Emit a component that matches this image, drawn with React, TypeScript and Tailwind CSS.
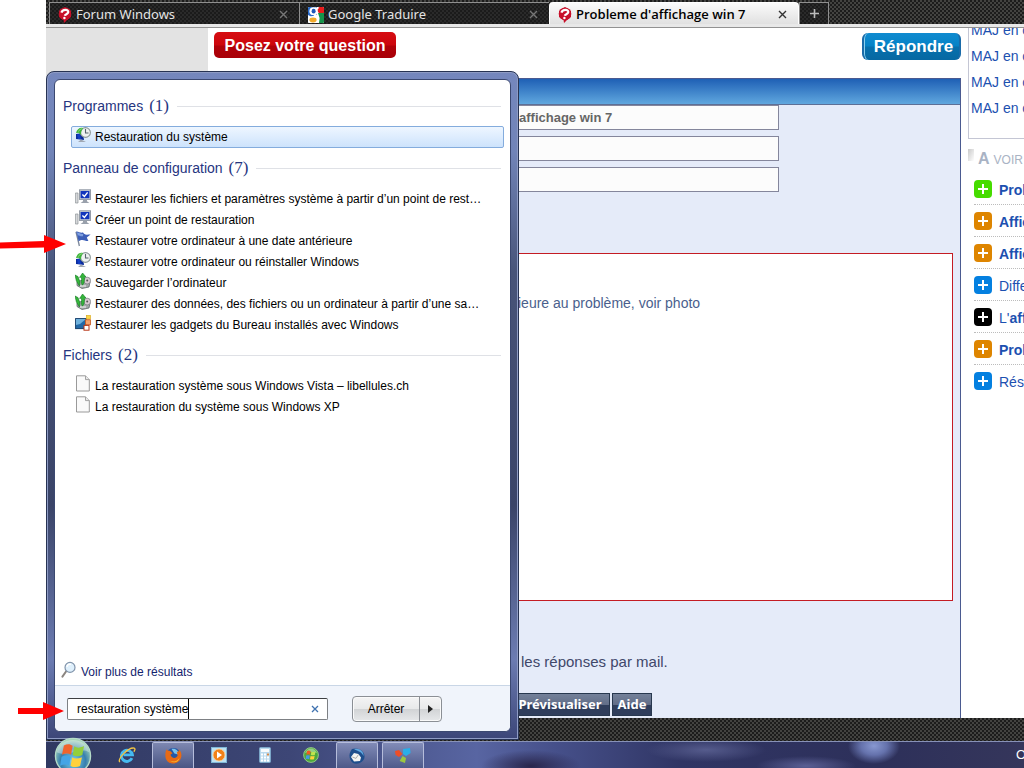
import React from "react";

const arial = "font-['Liberation_Sans',Arial,sans-serif]";
const segoe = "font-['Noto_Sans','Open_Sans',sans-serif]";
const carbon =
  "bg-[repeating-conic-gradient(#434341_0_25%,#1c1c1c_0_50%)] bg-[length:4px_4px]";

function HelpIcon() {
  return (
    <svg width="14" height="16" viewBox="0 0 14 16" className="shrink-0">
      <path d="M7 0 L13 4 V10 L9 13 L6 16 L5.5 13 L1 10 V4 Z" fill="#c8102a" />
      <circle cx="7" cy="6.8" r="6.3" fill="#c8102a" />
      <path d="M3.4 5.6 C4.6 1.6 11 2.2 10.2 5.4 C9.6 7.4 7.2 7 6.8 8.8" fill="none" stroke="#fff" strokeWidth="2.2" />
      <circle cx="6.4" cy="11" r="1.2" fill="#fff" />
    </svg>
  );
}

function GoogleIcon() {
  return (
    <svg width="16" height="16" viewBox="0 0 16 16" className="shrink-0">
      <rect width="16" height="16" rx="1" fill="#fff" />
      <path d="M0 1a1 1 0 0 1 1-1h8v8L3 9.5 0 8z" fill="#2a6bcb" />
      <path d="M10.5 0H15a1 1 0 0 1 1 1v5h-5L9 4z" fill="#ea1c1c" />
      <path d="M10 6h6v9a1 1 0 0 1-1 1h-4l.6-5z" fill="#16944a" />
      <ellipse cx="5.6" cy="4.2" rx="4.2" ry="3.9" fill="#fff" />
      <ellipse cx="5.6" cy="4.2" rx="2" ry="2.4" fill="#1d57b8" />
      <path d="M7 .4h4.4L10 2H8z" fill="#fff" />
      <path d="M5.4 7.4l2.8 0c3 2 3 4 2.8 8.2H0V11c2-2 4-1.6 6-2z" fill="#fff" />
      <ellipse cx="5" cy="13" rx="3.6" ry="2.4" fill="#f0a92a" />
    </svg>
  );
}

function RestoreIcon() {
  return (
    <svg width="16" height="16" viewBox="0 0 16 16">
      <path d="M1 7 L8 6 L9 13 L1 12Z" fill="#0b2c9c" />
      <path d="M2 7.5 L5 7 L6 12 L3 12Z" fill="#123fc4" />
      <path d="M3 15l3-2.4 5 2.4z" fill="#a0a8b4" />
      <circle cx="10.5" cy="5.5" r="4.9" fill="#eef2f1" stroke="#8d9a9a" strokeWidth="1.1" />
      <path d="M10.5 2v4h3" fill="none" stroke="#55626c" strokeWidth="1.1" />
      <path d="M1 6 C2 2 5 0 8 1 L7 3 C6 4 6 6 6 8 L3.6 5.8Z" fill="#3fb53b" />
      <path d="M3.4 4.6 C4.4 2.6 5.6 2 6.8 1.8" fill="none" stroke="#9be08c" strokeWidth=".9" />
    </svg>
  );
}

function MonitorIcon() {
  return (
    <svg width="16" height="16" viewBox="0 0 16 16">
      <path d="M.4 4h2.6v10H.4z" fill="#d6d8da" stroke="#8d9297" strokeWidth=".7" />
      <rect x="4.4" y=".8" width="11.2" height="9.6" fill="#c4cad4" stroke="#838b99" strokeWidth=".8" />
      <rect x="5.6" y="2" width="8.8" height="7.2" fill="#1236bd" />
      <path d="M7.4 5.4l2 2L12.6 3.4" fill="none" stroke="#fff" strokeWidth="1.4" />
      <path d="M8 10.5h4v1.8l2.4 1.6H5.6L8 12.3z" fill="#9aa1ac" />
    </svg>
  );
}

function FlagIcon() {
  return (
    <svg width="16" height="16" viewBox="0 0 16 16">
      <path d="M1 .8 L4.4 15" stroke="#7a8699" strokeWidth="1.3" />
      <path d="M1.2 .6 C3 -.2 5 2.4 8 1.6 L9 2.8 C11 4.2 13 3.4 15.6 3.4 L11.8 6.4 L13.4 10 C11 10.4 9.4 9 7.4 9 C6 9 5 9.6 3.6 10.2Z" fill="#3c5fb8" />
      <path d="M2 1.6 C4 1.4 5.4 3.4 8.2 3 L8 5.2 C5 5.8 4.6 4 2.7 4.2Z" fill="#7e9fe0" />
    </svg>
  );
}

function BackupIcon() {
  return (
    <svg width="16" height="16" viewBox="0 0 16 16">
      <path d="M2 9 L10 6 L15 9 L14 14 L7 15.5 L2 12.5Z" fill="#a5a9aa" stroke="#60676a" strokeWidth=".8" />
      <circle cx="12.2" cy="7.6" r="3.4" fill="#d9c9d2" stroke="#7a7f83" strokeWidth=".8" />
      <circle cx="12.2" cy="7.6" r="1" fill="#555" />
      <path d="M0 2l3 1.6L5 9 4.4 13 1.4 8Z M4.6 4.4l3-4.4 3.4 4H9.4c.2 4-.2 6-2 8.4C5.8 10 7 7 6.4 4.2Z" fill="#35b53b" stroke="#127a20" strokeWidth=".6" />
      <path d="M5 13h6" stroke="#eee" strokeWidth="1.1" />
    </svg>
  );
}

function GadgetIcon() {
  return (
    <svg width="16" height="16" viewBox="0 0 16 16">
      <rect x=".6" y="3.6" width="10.6" height="10" fill="#2268a6" stroke="#173f6b" />
      <path d="M1 4h10l-6 5-4 1z" fill="#6fb1dc" />
      <rect x="11.4" y=".5" width="4" height="3.6" fill="#fbd64a" stroke="#dcae22" strokeWidth=".7" />
      <rect x="10.4" y="4.8" width="5" height="5" fill="#f5a26c" stroke="#c4541c" strokeWidth=".8" />
      <rect x="9" y="10.4" width="5" height="4.8" fill="#fff" stroke="#b83616" strokeWidth="1" />
    </svg>
  );
}

function FileIcon() {
  return (
    <svg width="16" height="17" viewBox="0 0 16 17">
      <path d="M1.5 .8 H10.5 L14.3 4.6 V16 H1.5Z" fill="#fafafa" stroke="#9a9a9a" />
      <path d="M10.5 .8 V4.6 H14.3" fill="#e8e8e8" stroke="#9a9a9a" strokeWidth=".9" />
    </svg>
  );
}

function Tab({ icon, title, active }: { icon: React.ReactNode; title: string; active?: boolean }) {
  return (
    <div
      className={
        active
          ? "flex h-6 w-[250px] items-center rounded-t border border-b-0 border-white bg-linear-to-b from-[#fbfbfb] to-[#dedede] pl-2 pr-2 text-black"
          : "flex h-6 w-[250px] items-center border-l border-t border-[#8f8f8f] bg-[#1a1a1a]/60 pl-2 pr-2 text-[#e4e4e4]"
      }
    >
      {icon}
      <span className={active ? "ml-1 flex-1 whitespace-nowrap font-['Open_Sans','Noto_Sans',sans-serif] text-[13px] font-semibold" : "ml-1 flex-1 whitespace-nowrap text-[13px]"}>
        {title}
      </span>
      <button aria-label={"Fermer " + title} className="flex h-4 w-4 items-center justify-center">
        <svg width="9" height="9" viewBox="0 0 9 9">
          <path d="M1 1l7 7M8 1l-7 7" stroke={active ? "#333" : "#777"} strokeWidth="1.4" />
        </svg>
      </button>
    </div>
  );
}

function Section({ title, count, children }: { title: string; count: number; children: React.ReactNode }) {
  return (
    <section className="mb-[10px]">
      <h2 className="mr-[3px] flex h-5 items-center gap-[6px] text-[14px] text-[#26357f]">
        <span>{title}</span>
        <span className="font-['Liberation_Serif',serif] text-[17px] leading-5">({count})</span>
        <span className="ml-[2px] h-px flex-1 bg-[#dfe1e6]" />
      </h2>
      <ul className="mt-[10px] pl-2">{children}</ul>
    </section>
  );
}

function Result({ icon, label, selected }: { icon: React.ReactNode; label: string; selected?: boolean }) {
  return (
    <li>
      <button
        className={
          selected
            ? "flex h-[22px] w-full items-center gap-1 rounded-xs border border-[#84acdd] bg-linear-to-b from-[#eef6ff] to-[#cde3fc] pl-[3px] text-left text-[12px] text-black"
            : "flex h-[21px] w-full items-center gap-1 pl-1 text-left text-[12px] text-black"
        }
      >
        <span className="w-4 shrink-0 pb-1">{icon}</span>
        <span className="whitespace-nowrap">{label}</span>
      </button>
    </li>
  );
}

function StartMenu() {
  return (
    <div className="absolute bottom-7 left-0 top-[71px] flex w-[473px] flex-col rounded-t-lg border border-[#273353] bg-[linear-gradient(180deg,#7587bd_0%,#7184b8_12%,#485479_30%,#3a4468_65%,#6c7cb2_88%,#3c4678_100%)] p-[7px] shadow-[inset_0_0_0_1px_#8e9bc4]">
      <div className="flex flex-1 flex-col overflow-hidden rounded-md border border-[#3b4870] bg-white">
        <div className="flex-1 pl-2 pr-[6px] pt-4">
          <Section title="Programmes" count={1}>
            <Result selected icon={<RestoreIcon />} label="Restauration du système" />
          </Section>
          <Section title="Panneau de configuration" count={7}>
            <Result icon={<MonitorIcon />} label="Restaurer les fichiers et paramètres système à partir d’un point de rest…" />
            <Result icon={<MonitorIcon />} label="Créer un point de restauration" />
            <Result icon={<FlagIcon />} label="Restaurer votre ordinateur à une date antérieure" />
            <Result icon={<RestoreIcon />} label="Restaurer votre ordinateur ou réinstaller Windows" />
            <Result icon={<BackupIcon />} label="Sauvegarder l’ordinateur" />
            <Result icon={<BackupIcon />} label="Restaurer des données, des fichiers ou un ordinateur à partir d’une sa…" />
            <Result icon={<GadgetIcon />} label="Restaurer les gadgets du Bureau installés avec Windows" />
          </Section>
          <Section title="Fichiers" count={2}>
            <Result icon={<FileIcon />} label="La restauration système sous Windows Vista – libellules.ch" />
            <Result icon={<FileIcon />} label="La restauration du système sous Windows XP" />
          </Section>
        </div>
        <a href="#resultats" className="flex h-[26px] items-center gap-1 pl-[6px] text-[12px] text-[#14246e]">
          <svg width="16" height="18" viewBox="0 0 16 18" className="mb-1">
            <path d="M5.4 10 L1.4 15.6" stroke="#8b8580" strokeWidth="2" strokeLinecap="round" />
            <circle cx="9" cy="6.4" r="5" fill="#dff0fc" stroke="#8194ab" strokeWidth="1.2" />
            <path d="M6 6 C6 3.6 8 2.8 10 3.4" stroke="#fff" strokeWidth="1.4" fill="none" />
          </svg>
          Voir plus de résultats
        </a>
        <div className="flex h-[46px] items-center border-t border-[#c9d6e6] bg-[#f0f4fb] pl-3">
          <div className="flex h-[22px] w-[261px] items-center rounded-xs border border-[#7d8084] border-t-[#3d3f42] bg-white pl-[9px] pr-2">
            <label htmlFor="menu-search" className="sr-only">Rechercher</label>
            <span className="flex flex-1 items-center">
              <input
                id="menu-search"
                defaultValue="restauration système"
                className="field-sizing-content border-r border-black bg-transparent text-[12px] leading-5 text-black outline-none"
              />
            </span>
            <button aria-label="Effacer">
              <svg width="8" height="8" viewBox="0 0 8 8">
                <path d="M1 1l6 6M7 1L1 7" stroke="#3f72b0" strokeWidth="1.3" />
              </svg>
            </button>
          </div>
          <div className="ml-6 flex h-[26px] w-[90px] rounded-sm border border-[#8b8f95] bg-[linear-gradient(180deg,#f4f4f5_0%,#e8e9ea_48%,#d2d4d6_52%,#e6e8ea_100%)] shadow-[inset_0_0_0_1px_#fafafa]">
            <button className="flex-1 text-[12px] text-black">Arrêter</button>
            <button aria-label="Plus d’options" className="flex w-[22px] items-center justify-center border-l border-[#8b8f95]">
              <svg width="5" height="8" viewBox="0 0 5 8"><path d="M0 0L5 4L0 8Z" fill="#222" /></svg>
            </button>
          </div>
        </div>
      </div>
    </div>
  );
}

function TaskButton({ label, open, children }: { label: string; open?: boolean; children: React.ReactNode }) {
  return (
    <button
      aria-label={label}
      className={
        open
          ? "mr-1 flex h-[27px] w-[42px] items-center justify-center rounded-t-xs border border-b-0 border-[#b6bddb] bg-linear-to-b from-[#8f99c2]/80 to-[#4d5988]/80"
          : "mr-1 flex h-[27px] w-[42px] items-center justify-center"
      }
    >
      {children}
    </button>
  );
}

function WindowsLogo({ size }: { size: number }) {
  return (
    <svg width={size} height={size} viewBox="0 0 40 40" className="shrink-0">
      <defs>
        <radialGradient id="orb" cx=".5" cy=".65" r=".6">
          <stop offset="0" stopColor="#7fd4f2" />
          <stop offset=".6" stopColor="#367fae" />
          <stop offset="1" stopColor="#a4d4b8" />
        </radialGradient>
      </defs>
      <circle cx="20" cy="20" r="18.5" fill="url(#orb)" stroke="#b5dcc9" strokeWidth="1.4" />
      <path d="M3 16 C6 -1 34 -1 37 16 C27 10 15 22 3 16Z" fill="#fff" opacity=".35" />
      <path d="M10.4 9 C13.6 7 17 7 19.6 9.2 L18 18.6 C15 16.8 12 17 8.4 18.6Z" fill="#f0642c" />
      <path d="M21.4 9.8 C24.4 12 27.6 11.4 31.6 9.6 L29.8 19 C25.8 20.8 22.6 20.6 19.6 19Z" fill="#93cf3b" />
      <path d="M8 20.8 C11.4 19.2 15 19.2 17.6 20.8 L16 30 C13 28.4 10 28.6 6.4 30.2Z" fill="#45a4e6" />
      <path d="M19.2 21.4 C22 23.2 25.4 23 29.4 21.4 L27.4 30.6 C23.8 32.2 20.6 32 17.4 30.4Z" fill="#ffd13c" />
    </svg>
  );
}

function Taskbar() {
  return (
    <nav
      aria-label="Barre des tâches"
      className="relative z-10 flex h-[27px] items-center overflow-visible border-t border-[#8791b8] bg-[radial-gradient(ellipse_26px_18px_at_828px_4px,#8898d0_0%,#6572ac_50%,transparent_100%),radial-gradient(ellipse_60px_12px_at_660px_8px,#555b8c_0%,transparent_100%),radial-gradient(ellipse_50px_10px_at_760px_24px,#5a5f94_0%,transparent_100%),radial-gradient(ellipse_50px_16px_at_485px_24px,#29264c_0%,transparent_100%),linear-gradient(90deg,#303961_0%,#3d4676_25%,#5865a2_44%,#46508a_52%,#303564_65%,#2d305a_85%,#35365b_100%)]"
    >
      <button aria-label="Démarrer" className="mb-[-22px] mr-[6px] mt-[-6px] flex h-10 w-[54px] items-center justify-center self-start">
        <WindowsLogo size={38} />
      </button>
      <TaskButton label="Internet Explorer">
        <svg width="18" height="18" viewBox="0 0 20 20">
          <path d="M15.5 13.6 A6.2 6.2 0 1 1 16 9.8 H6" fill="none" stroke="#46baf0" strokeWidth="3.2" />
          <path d="M2 18 C-1 14 12 1 18 2.4 C19.6 3 18.6 5 17.6 6.4" fill="none" stroke="#f2c643" strokeWidth="1.5" />
        </svg>
      </TaskButton>
      <TaskButton open label="Firefox">
        <svg width="17" height="17" viewBox="0 0 18 18">
          <circle cx="9" cy="9" r="8" fill="#2558a6" />
          <path d="M7 2 C11 1 15 4 14 8 L10 7Z" fill="#79c3ec" />
          <path d="M1.6 2.4 C2.6 4 4 4 5.6 4.2 L8 6.6 L5.8 8.2 C6.6 12 12 13 13.4 8.8 L12.4 5 C14.6 5.6 15.4 3.4 14.2 2 C18 5 18.6 11 15 14.8 C10 19.6 2 17.6 .6 11 C0 8 .4 5 1.6 2.4Z" fill="#e86a14" />
          <path d="M3 12 C6 17 12 16.4 15.4 11.6 C14 17 7 18.4 3 12Z" fill="#fbc02e" />
        </svg>
      </TaskButton>
      <TaskButton label="Lecteur Windows Media">
        <svg width="16" height="16" viewBox="0 0 16 16">
          <rect x=".5" y=".5" width="15" height="15" fill="#bfe2f3" stroke="#80b8d8" />
          <circle cx="8" cy="8" r="6" fill="#f18118" stroke="#fbd6a0" strokeWidth=".8" />
          <path d="M6 4.5L11 8L6 11.5Z" fill="#fff" />
        </svg>
      </TaskButton>
      <TaskButton label="Calculatrice">
        <svg width="12" height="16" viewBox="0 0 12 16">
          <rect x=".5" y=".5" width="11" height="15" rx="1" fill="#b9d8ec" stroke="#7ba6c8" />
          <rect x="2" y="2" width="8" height="3" fill="#f8fbfc" />
          <path d="M2 7.5h8M2 10.5h8M2 13.5h8" stroke="#fff" strokeWidth="1.8" strokeDasharray="2 1" />
          <path d="M8 7.5h2" stroke="#d68744" strokeWidth="1.8" />
        </svg>
      </TaskButton>
      <TaskButton label="Windows Media Center">
        <svg width="16" height="16" viewBox="0 0 16 16">
          <circle cx="8" cy="8" r="7.4" fill="#4ca83c" stroke="#a6d793" strokeWidth=".8" />
          <path d="M2 6C4 0 12 0 14 6Q8 4 2 6Z" fill="#c3e8b6" opacity=".6" />
          <path d="M4 4q1.8-1.2 3.6 0L7 7.7q-1.8-.8-3.6 0Z" fill="#ee5a24" />
          <path d="M8.4 4.4q1.8 1 4 0l-.6 3.5q-2 .8-4 0Z" fill="#bfe44c" />
          <path d="M3.2 8.6q1.8-.8 3.6 0l-.6 3.6q-1.8-.8-3.6 0Z" fill="#4498e4" />
          <path d="M7.6 8.8q1.8 1 4 0l-.6 3.4q-2 .8-4 0Z" fill="#ffd23a" />
        </svg>
      </TaskButton>
      <TaskButton open label="Thunderbird">
        <svg width="16" height="16" viewBox="0 0 16 16">
          <path d="M3 1 C9 -1 16 3 15.5 9 C15 14 9 17 4 15 C0 12 -1 6 3 1Z" fill="#1e4e8c" />
          <path d="M5 1 C11 0 15 4 14.5 8 C12 3 8 3 5 1Z" fill="#60a8e0" />
          <path d="M2 9 L5 5 L9.4 6 L12 9.6 L11 13 L5 13.6Z" fill="#f4f4f2" />
          <path d="M3.4 9 L7 10.4 L9.4 6.6" fill="none" stroke="#999" strokeWidth=".8" />
        </svg>
      </TaskButton>
      <TaskButton open label="Photos">
        <svg width="18" height="17" viewBox="0 0 18 17">
          <path d="M1 4 L5 3 L8.4 7 L5 10 L1.6 8Z" fill="#ee4e27" />
          <path d="M9 2 L16 1 L16.6 6 L12 9 L9 7Z" fill="#29aee8" />
          <path d="M8.6 9 L12 11 L11 16 L5.6 14Z" fill="#9bc740" />
        </svg>
      </TaskButton>
      <span className="ml-auto w-2 overflow-hidden text-[13px] text-white">O</span>
    </nav>
  );
}

const related: { color: string; label: React.ReactNode }[] = [
  { color: "bg-[#46dc00]", label: <b>Prob</b> },
  { color: "bg-[#de8500]", label: <b>Affic</b> },
  { color: "bg-[#de8500]", label: <b>Affic</b> },
  { color: "bg-[#0480e0]", label: "Diffe" },
  { color: "bg-black", label: <>L'<b>aff</b></> },
  { color: "bg-[#de8500]", label: <b>Prob</b> },
  { color: "bg-[#0480e0]", label: "Rése" },
];

function Sidebar() {
  return (
    <aside className={"w-[56px] shrink-0 overflow-hidden whitespace-nowrap text-[14px] text-[#1c50b0] " + arial}>
      <div className="flex h-[111px] flex-col justify-end border-b border-l border-[#c4c6d4] pb-[17px] pl-[2px]">
        {["MAJ en c", "MAJ en c", "MAJ en c", "MAJ en c"].map((t, i) => (
          <a key={i} href="#maj" className="block h-[26px] shrink-0 leading-[26px]">{t}</a>
        ))}
      </div>
      <h3 className="mt-2 flex h-6 items-center text-[#a9b3c4]">
        <span className="mb-2 h-3 w-[6px] bg-linear-to-br from-[#c9c9c9] to-white" />
        <span className="ml-1 text-[16px] font-bold">A</span>
        <span className="ml-1 mt-[2px] text-[12px]">VOIR</span>
      </h3>
      <ul className="mt-[2px] pl-[6px]">
        {related.map((r, i) => (
          <li key={i} className="flex h-8 items-center border-b border-dotted border-[#bcbcbc] last:border-b-0">
            <span className={"flex h-[18px] w-[18px] shrink-0 items-center justify-center rounded-[4px] " + r.color}>
              <svg width="10" height="10" viewBox="0 0 10 10"><path d="M5 0v10M0 5h10" stroke="#fff" strokeWidth="2" /></svg>
            </span>
            <a href="#sujet" className="ml-[7px] mt-[3px]">{r.label}</a>
          </li>
        ))}
      </ul>
    </aside>
  );
}

function ReplyForm() {
  const field = "h-[25px] w-[269px] border border-[#84869c] bg-[#fcfcfc] pl-2 text-[13px] font-bold text-[#666] outline-none";
  const action = "h-[23px] border border-[#28384f] bg-[linear-gradient(180deg,#74819a_0%,#626e88_50%,#303e5c_52%,#303e5c_100%)] text-[13px] font-bold text-white";
  return (
    <form className="flex flex-1 flex-col border border-b-0 border-[#4a5a90] bg-[#e5ebf9]" onSubmit={(e) => e.preventDefault()}>
      <div className="h-[26px] border-b border-[#5d6f96] bg-linear-to-b from-[#1f60b5] to-[#60a7de]" />
      <div className="ml-[301px] flex flex-col gap-[6px]">
        <input aria-label="Sujet" className={field} defaultValue="affichage win 7" />
        <input aria-label="Pseudo" className={field} />
        <input aria-label="Adresse mail" className={field} />
      </div>
      <textarea
        aria-label="Message"
        defaultValue="ieure au problème, voir photo"
        className="ml-[220px] mr-[7px] mt-[61px] block h-[348px] resize-none border border-[#c41c24] bg-white pl-[88px] pt-[39px] text-[14px] leading-5 text-[#4a5f8d] outline-none"
      />
      <p className="ml-[312px] mt-[50px] h-[22px] text-[15px] leading-[22px] text-[#40476a]">les réponses par mail.</p>
      <div className={"mb-[2px] ml-[301px] mt-5 flex gap-[2px] " + segoe}>
        <button className={action + " w-[100px]"}>Prévisualiser</button>
        <button className={action + " w-10"}>Aide</button>
      </div>
    </form>
  );
}

export default function App() {
  return (
    <div className={"relative min-h-screen overflow-hidden bg-white pl-[46px] " + arial}>
      <div className="relative flex min-h-screen flex-col">
        <header className={"flex h-6 pt-[2px] " + carbon + " " + segoe}>
          <div className="ml-[3px] flex">
            <Tab icon={<HelpIcon />} title="Forum Windows" />
            <Tab icon={<GoogleIcon />} title="Google Traduire" />
            <Tab active icon={<HelpIcon />} title="Probleme d'affichage win 7" />
            <button aria-label="Nouvel onglet" className="flex h-[22px] w-[30px] items-center justify-center border border-b-0 border-[#8f8f8f] bg-[#1a1a1a]/60">
              <svg width="9" height="9" viewBox="0 0 9 9"><path d="M4.5 0v9M0 4.5h9" stroke="#bbb" strokeWidth="1.6" /></svg>
            </button>
          </div>
        </header>
        <div className="h-1 border-b border-[#929292] bg-[#e8e8e8]" />
        <main className="flex flex-1">
          <div className="w-[162px] shrink-0 bg-[#e3e3e3]" />
          <div className="flex min-w-0 flex-1 flex-col pr-[7px]">
            <div className="flex h-[50px] items-start justify-between pl-[6px] pt-1">
              <button className="h-[26px] w-[182px] rounded-[5px] bg-[linear-gradient(180deg,#d60d12_0%,#cc060c_50%,#b00209_54%,#a90008_100%)] pt-[2px] text-[16px] font-bold text-white">
                Posez votre question
              </button>
              <button className="mt-px h-[27px] w-[99px] rounded-md border-x-2 border-[#1a6ba9] bg-[linear-gradient(180deg,#108bd0_0%,#0582c6_48%,#0670ad_52%,#0768a2_100%)] pl-1 text-[17px] font-bold leading-6 text-white shadow-[inset_1px_0_0_#8bd0ef]">
                Répondre
              </button>
            </div>
            <ReplyForm />
          </div>
          <Sidebar />
        </main>
        <div className={"h-[23px] " + carbon} />
        <Taskbar />
        <StartMenu />
      </div>
      <svg width="68" height="22" viewBox="0 0 68 22" className="absolute left-0 top-[233px]">
        <path d="M0 9.5 L44 8 V2 L66 11 L44 20 V14.5 L0 15.5Z" fill="#f00" />
      </svg>
      <svg width="50" height="20" viewBox="0 0 50 20" className="absolute left-[18px] top-[701px]">
        <path d="M0 7 H25 V1 L46 10 L25 19 V13 H0Z" fill="#f00" />
      </svg>
    </div>
  );
}
